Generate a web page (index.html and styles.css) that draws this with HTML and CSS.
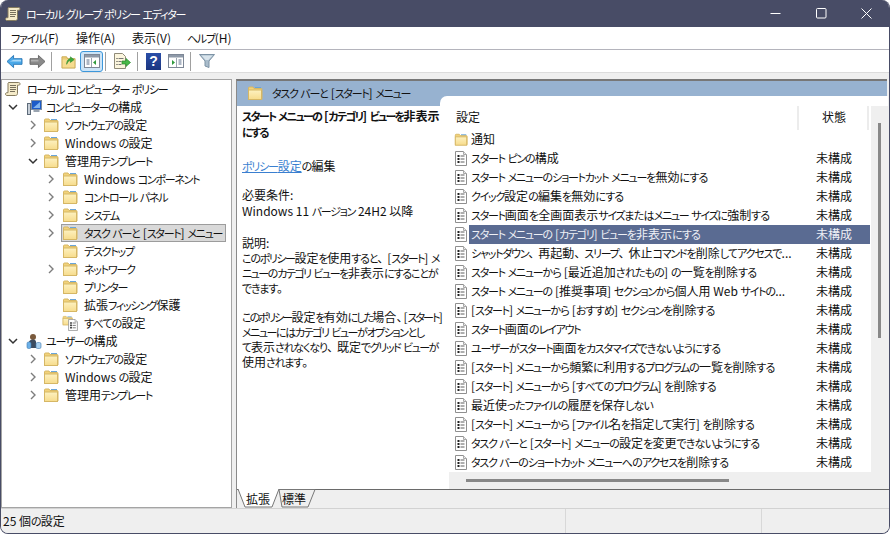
FILE: index.html
```html
<!DOCTYPE html>
<html lang="ja">
<head>
<meta charset="utf-8">
<title>ローカル グループ ポリシー エディター</title>
<link rel="stylesheet" href="styles.css">
</head>
<body>
<svg class="defs" aria-hidden="true">
  <defs>
    <linearGradient id="gf" x1="0" y1="0" x2="0" y2="1"><stop offset="0" stop-color="#fdf1c0"/><stop offset="1" stop-color="#f7dc8c"/></linearGradient>
    <symbol id="folder" viewBox="0 0 16 16">
      <path d="M1.5 14V3a1 1 0 0 1 1-1h3.5l1 1.5h7a1 1 0 0 1 1 1V14z" fill="#f2d27a" stroke="#d6b765"/>
      <path d="M8 2.5h6" stroke="#6aa5d8" fill="none"/>
      <rect x="1.5" y="5" width="13" height="9.5" fill="url(#gf)" stroke="#d6b765"/>
    </symbol>
    <symbol id="doc" viewBox="0 0 14 15">
      <path d="M1.500.5h8l3 3v11h-11z" fill="#fff" stroke="#8f8f8f"/>
      <path d="M9.500.5v3h3" fill="#e8e8e8" stroke="#a8a8a8"/>
      <path d="M3.500 4h2v2h-2zM3.500 7h2v2h-2zM3.500 10h2v2h-2z" fill="#202020"/>
      <path d="M6.500 5h4M6.500 8h4M6.500 11h4" stroke="#5c5c5c"/>
    </symbol>
    <symbol id="scroll" viewBox="0 0 16 16">
      <path d="M3.500 1.500h10c1 0 1.500.6 1.500 1.500s-.6 1.200-1.500 1.200H12.500V12.500c0 1.200-.8 2-2 2H2c-.9 0-1.500-.6-1.500-1.500s.7-1.300 1.500-1.300h1V3c0-.8-.1-1.200.5-1.500z" fill="#f5ebc9" stroke="#857b5e"/>
      <path d="M5 4.500h6M5 6.500h6M5 8.500h6M5 10.500h5" stroke="#77705c"/>
    </symbol>
    <symbol id="chev-r" viewBox="0 0 10 10"><path d="M3 1l4 4-4 4" fill="none" stroke="#7d7d7d" stroke-width="1.400"/></symbol>
    <symbol id="chev-d" viewBox="0 0 10 10"><path d="M1 3l4 4 4-4" fill="none" stroke="#333" stroke-width="1.500"/></symbol>
  </defs>
</svg>

<div class="win">
  <header class="title">
    <svg class="ico16"><use href="#scroll"/></svg>
    <span class="title-text">ローカル グループ ポリシー エディター</span>
    <div class="controls">
      <svg class="ctl" viewBox="0 0 11 11"><path d="M.5 5.500h10" stroke="#fff"/></svg>
      <svg class="ctl" viewBox="0 0 11 11"><rect x=".5" y=".5" width="9.500" height="9.500" rx="1" fill="none" stroke="#fff"/></svg>
      <svg class="ctl" viewBox="0 0 11 11"><path d="M.5.500l10 10M10.500.500l-10 10" stroke="#fff"/></svg>
    </div>
  </header>

  <nav class="menu">
    <span class="m1">ファイル(F)</span><span class="m2">操作(A)</span><span class="m3">表示(V)</span><span class="m4">ヘルプ(H)</span>
  </nav>

  <div class="toolbar">
    <svg class="tb tb-back" viewBox="0 0 18 16"><path d="M1 8l7-6.500V5h9v6H8v3.500z" fill="#4aa8e8" stroke="#2a78b8"/><path d="M8 6h8v2H4z" fill="#a8d8f8"/></svg>
    <svg class="tb tb-fwd" viewBox="0 0 18 16"><path d="M17 8l-7-6.500V5H1v6h9v3.500z" fill="#8a8a8a" stroke="#666"/><path d="M2 6h8v2H2z" fill="#b0b0b0"/></svg>
    <i class="sep sep1"></i>
    <svg class="tb tb-up" viewBox="0 0 16 16"><path d="M1 15V5h14v10z" fill="#f6dc90" stroke="#c8a850"/><path d="M1 5V3h5l1 2" fill="#f0d078" stroke="#c8a850"/><path d="M6 11c0-4 2-6 4-6V3l4 3-4 3V7c-1.500 0-3 1.500-4 4z" fill="#3aa83a" stroke="#2a8a2a" stroke-width=".6"/></svg>
    <span class="tb-on">
      <svg class="tb-in" viewBox="0 0 16 14"><rect x=".5" y=".5" width="15" height="13" fill="#fff" stroke="#7d8796"/><rect x="1" y="1" width="14" height="2.500" fill="#8e99a8"/><path d="M7.500 4v9" stroke="#9aa4b0"/><path d="M2.500 6h3M2.500 8h3M2.500 10h3" stroke="#5b6e8a"/><path d="M12 6v5L9 8.500z" fill="#2f9a3c"/></svg>
    </span>
    <i class="sep sep2"></i>
    <svg class="tb tb-exp" viewBox="0 0 18 17"><path d="M1.500.5h8l3 3v12h-11z" fill="#fbf5dd" stroke="#8f8a78"/><path d="M3.500 5h1v1h-1zM3.500 8h1v1h-1zM3.500 11h1v1h-1z" fill="#333"/><path d="M5.500 5.500h5M5.500 8.500h3M5.500 11.500h3" stroke="#777"/><path d="M9 8h4V5.500l4.500 4-4.500 4V11H9z" fill="#48b848" stroke="#2c8a2c" stroke-width=".7"/></svg>
    <i class="sep sep3"></i>
    <span class="help">?</span>
    <svg class="tb tb-panel" viewBox="0 0 16 14"><rect x=".5" y=".5" width="15" height="13" fill="#fff" stroke="#7d8796"/><rect x="1" y="1" width="14" height="2.500" fill="#8e99a8"/><path d="M8.500 4v9" stroke="#9aa4b0"/><path d="M10.500 6h3M10.500 8h3M10.500 10h3" stroke="#5b6e8a"/><path d="M4 6v5l3-2.500z" fill="#2f9a3c"/></svg>
    <i class="sep sep4"></i>
    <svg class="tb tb-filter" viewBox="0 0 16 16"><path d="M.5 1.500h15L10 8v6.500L6 13V8z" fill="#a9bccb" stroke="#7d93a5"/><path d="M2.500 2.500h11L9.500 7h-3z" fill="#d8e4ec"/></svg>
  </div>

  <main class="main">
    <aside class="tree">
      <div class="node lv0"><svg class="ico16"><use href="#scroll"/></svg><span>ローカル コンピューター ポリシー</span></div>
      <div class="node lv1"><svg class="chev"><use href="#chev-d"/></svg>
        <svg class="ico16" viewBox="0 0 16 16"><rect x="5.500" y="1.500" width="10" height="9" fill="#1c5cc8" stroke="#7d8da0"/><path d="M7 9l7-6v6z" fill="#7fb4f0"/><rect x="7.500" y="11" width="6" height="2" fill="#9aa4b0"/><rect x="1.500" y="4.500" width="3" height="11" fill="#c7cfd8" stroke="#5e6b7a"/></svg>
        <span>コンピューターの構成</span></div>
      <div class="node lv2"><svg class="chev"><use href="#chev-r"/></svg><svg class="ico16"><use href="#folder"/></svg><span>ソフトウェアの設定</span></div>
      <div class="node lv2"><svg class="chev"><use href="#chev-r"/></svg><svg class="ico16"><use href="#folder"/></svg><span>Windows の設定</span></div>
      <div class="node lv2"><svg class="chev"><use href="#chev-d"/></svg><svg class="ico16"><use href="#folder"/></svg><span>管理用テンプレート</span></div>
      <div class="node lv3"><svg class="chev"><use href="#chev-r"/></svg><svg class="ico16"><use href="#folder"/></svg><span>Windows コンポーネント</span></div>
      <div class="node lv3"><svg class="chev"><use href="#chev-r"/></svg><svg class="ico16"><use href="#folder"/></svg><span>コントロール パネル</span></div>
      <div class="node lv3"><svg class="chev"><use href="#chev-r"/></svg><svg class="ico16"><use href="#folder"/></svg><span>システム</span></div>
      <div class="node lv3"><svg class="chev"><use href="#chev-r"/></svg><div class="tree-sel"><svg class="ico16"><use href="#folder"/></svg><span>タスク バーと [スタート] メニュー</span></div></div>
      <div class="node lv3"><i class="chev"></i><svg class="ico16"><use href="#folder"/></svg><span>デスクトップ</span></div>
      <div class="node lv3"><svg class="chev"><use href="#chev-r"/></svg><svg class="ico16"><use href="#folder"/></svg><span>ネットワーク</span></div>
      <div class="node lv3"><i class="chev"></i><svg class="ico16"><use href="#folder"/></svg><span>プリンター</span></div>
      <div class="node lv3"><i class="chev"></i><svg class="ico16"><use href="#folder"/></svg><span>拡張フィッシング保護</span></div>
      <div class="node lv3"><i class="chev"></i><svg class="ico16" viewBox="0 0 16 16"><use href="#folder" width="11" height="11"/><use href="#doc" x="5" y="4" width="12" height="12"/></svg><span>すべての設定</span></div>
      <div class="node lv1"><svg class="chev"><use href="#chev-d"/></svg>
        <svg class="ico16" viewBox="0 0 16 16"><circle cx="7" cy="4" r="3" fill="#7a5a3c"/><path d="M3 15V9c0-1.500 2-2.500 4-2.500s3 1 3 2.500v6z" fill="#3c4c60"/><rect x="1" y="9" width="4" height="6.500" rx="1.500" fill="#6bb0e8" stroke="#3c78b0" stroke-width=".6"/><rect x="10" y="9.500" width="5" height="6" rx="1.500" fill="#a8d0f0" stroke="#3c78b0" stroke-width=".6"/></svg>
        <span>ユーザーの構成</span></div>
      <div class="node lv2"><svg class="chev"><use href="#chev-r"/></svg><svg class="ico16"><use href="#folder"/></svg><span>ソフトウェアの設定</span></div>
      <div class="node lv2"><svg class="chev"><use href="#chev-r"/></svg><svg class="ico16"><use href="#folder"/></svg><span>Windows の設定</span></div>
      <div class="node lv2"><svg class="chev"><use href="#chev-r"/></svg><svg class="ico16"><use href="#folder"/></svg><span>管理用テンプレート</span></div>
    </aside>

    <section class="pane">
      <div class="pane-head"><svg class="ico16"><use href="#folder"/></svg><span>タスク バーと [スタート] メニュー</span></div>
      <div class="pane-body">
        <div class="details">
          <p class="d-title">スタート メニューの [カテゴリ] ビューを非表示<br>にする</p>
          <p class="d-link"><a href="#">ポリシー設定</a>の編集</p>
          <p class="d-req">必要条件:<br>Windows 11 バージョン 24H2 以降</p>
          <p class="d-desc">説明:<br>このポリシー設定を使用すると、[スタート] メ<br>ニューのカテゴリ ビューを非表示にすることが<br>できます。</p>
          <p class="d-desc2"><span class="tight">このポリシー設定を有効にした場合、[スタート]</span><br>メニューにはカテゴリ ビューがオプションとし<br>て表示されなくなり、既定でグリッド ビューが<br>使用されます。</p>
        </div>
        <div class="listwrap">
          <div class="list-top">
            <div class="list">
              <div class="cols"><span class="col-name">設定</span><span class="col-state">状態</span></div>
              <div class="row"><svg class="ico-row fold"><use href="#folder"/></svg><span class="nm">通知</span></div>
              <div class="row"><svg class="ico-row"><use href="#doc"/></svg><span class="nm">スタート ピンの構成</span><span class="st">未構成</span></div>
              <div class="row"><svg class="ico-row"><use href="#doc"/></svg><span class="nm">スタート メニューのショートカット メニューを無効にする</span><span class="st">未構成</span></div>
              <div class="row"><svg class="ico-row"><use href="#doc"/></svg><span class="nm">クイック設定の編集を無効にする</span><span class="st">未構成</span></div>
              <div class="row"><svg class="ico-row"><use href="#doc"/></svg><span class="nm">スタート画面を全画面表示サイズまたはメニュー サイズに強制する</span><span class="st">未構成</span></div>
              <div class="row on"><svg class="ico-row"><use href="#doc"/></svg><span class="nm">スタート メニューの [カテゴリ] ビューを非表示にする</span><span class="st">未構成</span></div>
              <div class="row"><svg class="ico-row"><use href="#doc"/></svg><span class="nm">シャットダウン、再起動、スリープ、休止コマンドを削除してアクセスで...</span><span class="st">未構成</span></div>
              <div class="row"><svg class="ico-row"><use href="#doc"/></svg><span class="nm">スタート メニューから [最近追加されたもの] の一覧を削除する</span><span class="st">未構成</span></div>
              <div class="row"><svg class="ico-row"><use href="#doc"/></svg><span class="nm">スタート メニューの [推奨事項] セクションから個人用 Web サイトの...</span><span class="st">未構成</span></div>
              <div class="row"><svg class="ico-row"><use href="#doc"/></svg><span class="nm">[スタート] メニューから [おすすめ] セクションを削除する</span><span class="st">未構成</span></div>
              <div class="row"><svg class="ico-row"><use href="#doc"/></svg><span class="nm">スタート画面のレイアウト</span><span class="st">未構成</span></div>
              <div class="row"><svg class="ico-row"><use href="#doc"/></svg><span class="nm">ユーザーがスタート画面をカスタマイズできないようにする</span><span class="st">未構成</span></div>
              <div class="row"><svg class="ico-row"><use href="#doc"/></svg><span class="nm">[スタート] メニューから頻繁に利用するプログラムの一覧を削除する</span><span class="st">未構成</span></div>
              <div class="row"><svg class="ico-row"><use href="#doc"/></svg><span class="nm">[スタート] メニューから [すべてのプログラム] を削除する</span><span class="st">未構成</span></div>
              <div class="row"><svg class="ico-row"><use href="#doc"/></svg><span class="nm">最近使ったファイルの履歴を保存しない</span><span class="st">未構成</span></div>
              <div class="row"><svg class="ico-row"><use href="#doc"/></svg><span class="nm">[スタート] メニューから [ファイル名を指定して実行] を削除する</span><span class="st">未構成</span></div>
              <div class="row"><svg class="ico-row"><use href="#doc"/></svg><span class="nm">タスク バーと [スタート] メニューの設定を変更できないようにする</span><span class="st">未構成</span></div>
              <div class="row"><svg class="ico-row"><use href="#doc"/></svg><span class="nm">タスク バーのショートカット メニューへのアクセスを削除する</span><span class="st">未構成</span></div>
            </div>
            <div class="vscroll"><i></i></div>
          </div>
          <div class="hscroll"><i></i></div>
        </div>
      </div>
      <div class="tabs">
        <svg class="tabs-bg" viewBox="0 0 652 19" aria-hidden="true">
          <path d="M0 .5H652" stroke="#6a6a6a" fill="none"/>
          <path d="M1 0l7 18h27l7-18z" fill="#fff"/>
          <path d="M1 0l7 18h27l7-18" stroke="#777" fill="none"/>
          <path d="M42 .5h36l-7 17.500H45z" fill="#efefef" stroke="#777"/>
        </svg>
        <span class="tab t1">拡張</span><span class="tab t2">標準</span>
      </div>
    </section>
  </main>

  <footer class="status"><span class="s1">25 個の設定</span><span class="s2"></span><span class="s3"></span></footer>
</div>
<script src="kana.js"></script>
</body>
</html>
```
FILE: styles.css
```css
* { box-sizing: border-box; }
html, body { margin: 0; padding: 0; background: #fff; }
body {
  width: 890px; height: 534px; overflow: hidden;
  font: 12px/16px "Noto Sans CJK JP", "Noto Sans", sans-serif;
  font-feature-settings: "palt";
  color: #111;
}
.hira, .kata { font-size: 11px; line-height: 1; }
.hira { letter-spacing: -.8px; }
.kata { letter-spacing: -1.25px; }
.punct { font-feature-settings: normal; letter-spacing: -2px; }
.defs { position: absolute; width: 0; height: 0; }
p { margin: 0; }

.win {
  width: 890px; height: 534px;
  display: flex; flex-direction: column;
  background: #efefef;
  border: 1px solid #484c66; border-top: 0;
  border-radius: 8px;
  overflow: hidden;
}

.title {
  height: 27px; flex: none; background: #484c66; color: #fff;
  display: flex; align-items: center; padding-left: 4px;
}
.ico16 { width: 16px; height: 16px; flex: none; }
.title-text { margin-left: 5px; white-space: nowrap; }
.controls { margin-left: auto; display: flex; gap: 34.5px; padding-right: 17px; }
.ctl { width: 11px; height: 11px; }

.menu {
  height: 23px; flex: none; background: #fff; border-bottom: 1px solid #b4b4bc;
  display: flex; align-items: center; padding-bottom: 1px; padding-left: 10px;
}
.m1 { width: 65px; } .m2 { width: 56px; } .m3 { width: 55px; }

.toolbar {
  height: 23px; flex: none; background: #fff; border-bottom: 1px solid #dcdcdc;
  display: flex; align-items: center; padding-left: 5px;
}
.tb { flex: none; }
.tb-back, .tb-fwd { width: 17px; height: 15px; }
.tb-fwd { margin-left: 6px; }
.sep { width: 1px; height: 19px; background: #a0a0a0; flex: none; }
.sep1 { margin: 0 9px 0 5px; }
.tb-up { width: 15px; height: 15px; }
.tb-on {
  width: 23px; height: 21px; margin-left: 4px; flex: none;
  background: #cce4f7; border: 1px solid #3d97da; border-radius: 3px;
  display: flex; align-items: center; justify-content: center;
}
.tb-in { width: 16px; height: 14px; }
.sep2 { margin: 0 7px 0 2px; }
.tb-exp { width: 18px; height: 17px; }
.sep3 { margin: 0 8px 0 6px; }
.help {
  width: 15px; height: 17px; flex: none; background: linear-gradient(#2a4fa8, #1c3580);
  color: #fff; font: 700 14px/17px "Liberation Sans", sans-serif; text-align: center;
}
.tb-panel { width: 16px; height: 14px; margin-left: 7px; }
.sep4 { margin: 0 8px 0 6px; }
.tb-filter { width: 16px; height: 16px; }

.main {
  flex: 1; min-height: 0; display: flex; gap: 4px;
  padding: 6px 2px 0 0;
  background: #efefef;
  border-bottom: 1px solid #d2d2d2;
}

.tree {
  width: 231px; flex: none; background: #fff;
  border: 1px solid #a4a4a4;
  white-space: nowrap;
}
.node { height: 18px; display: flex; align-items: center; }
.node > span { margin-left: 6px; }
.chev { width: 10px; height: 10px; flex: none; display: block; }
.lv0 { padding-left: 3px; }
.lv1 { padding-left: 6px; }
.lv1 .chev { margin-right: 8px; }
.lv1 > span { margin-left: 4px; }
.lv2 { padding-left: 26px; }
.lv2 .chev { margin-right: 5px; }
.lv3 { padding-left: 44px; }
.lv3 .chev { margin-right: 6px; }
.tree-sel {
  display: flex; align-items: center; height: 18px; width: 165px;
  margin-left: -1px;
  background: #d9d9d9; border: 1px solid #9c9c9c;
  overflow: hidden;
}
.tree-sel > span { margin-left: 6px; }

.pane {
  flex: 1; min-width: 0; display: flex; flex-direction: column;
  border-left: 1px solid #8a8a8a; border-top: 2px solid #777;
  background: #fff;
}
.pane-head {
  height: 25px; flex: none; background: #97b2d0; display: flex; align-items: center;
  padding-left: 10px; padding-bottom: 2px;
}
.pane-head > span { margin-left: 9px; white-space: nowrap; }
.pane-body { flex: 1; min-height: 0; display: flex; background: #fff; }
.details { width: 203px; flex: none; padding: 2px 0 0 5px; white-space: nowrap; line-height: 15px; position: relative; z-index: 1; }
.d-title { font-weight: 700; line-height: 16px; }
.d-title .hira, .d-title .kata { letter-spacing: -1.7px; }
.d-link { margin-top: 18px; }
.d-link a { color: #3a7fd0; }
.d-req { margin-top: 14px; line-height: 16px; }
.d-desc { margin-top: 16px; }
.d-desc2 { margin-top: 14px; }
.d-desc .hira, .d-desc2 .hira { letter-spacing: -1.2px; }
.d-desc .kata, .d-desc2 .kata { letter-spacing: -1.5px; }
.d-desc2 .tight .hira, .d-desc2 .tight .kata { letter-spacing: -1.9px; }
.d-desc2 .tight .punct { letter-spacing: -5px; }

.listwrap {
  width: 448px; flex: none; margin-top: -10px; position: relative;
  display: flex; flex-direction: column; height: 394px;
  background: #fff; border-radius: 7px 0 0 0;
}
.list-top { display: flex; height: 376px; padding-left: 9px; }
.list { width: 422px; flex: none; background: #fff; }
.cols { height: 34px; display: flex; align-items: flex-start; padding-top: 10px; }
.col-name { width: 343px; margin-left: 7px; height: 24px; line-height: 22px; border-right: 2px solid #ececec; flex: none; }
.col-state { width: 70px; height: 24px; line-height: 22px; padding-left: 2px; text-align: center; border-right: 2px solid #ececec; flex: none; }
.row { height: 19px; display: flex; align-items: center; white-space: nowrap; }
.ico-row { width: 14px; height: 15px; margin-left: 5px; flex: none; }
.nm {
  margin-left: 1px; padding-left: 2px; width: 347px; height: 19px; line-height: 17px; flex: none;
  overflow: hidden;
}
.st { width: 54px; height: 19px; line-height: 17px; flex: none; }
.row.on .nm, .row.on .st { background: #5a6b92; color: #eef0f6; }
.vscroll { flex: 1; margin-top: 10px; background: #efefef; display: flex; justify-content: center; padding-top: 17px; }
.vscroll i { width: 3px; height: 215px; background: #888; display: block; }
.hscroll { height: 18px; margin-left: 9px; background: #efefef; padding: 7px 0 0 17px; }
.hscroll i { display: block; width: 263px; height: 3px; background: #888; }

.tabs { height: 19px; flex: none; position: relative; background: #efefef; display: flex; padding-left: 9px; }
.tabs-bg { position: absolute; left: 0; top: 0; width: 652px; height: 19px; }
.tab { position: relative; width: 36px; line-height: 20px; }

.status {
  height: 24px; flex: none; display: flex; background: #efefef; line-height: 23px;
  padding-left: 2px;
}
.s1 { width: 563px; border-right: 1px solid #d8d8d8; }
.s2 { width: 196px; border-right: 1px solid #d8d8d8; }
.s3 { flex: 1; }
```
FILE: kana.js
```js
// Kana in the UI font of the reference are much narrower than the kanji,
// and no installed font does that, so runs of kana get classes of their own.
var runs = /([\u3040-\u309f]+|[\u30a0-\u30ff]+|[\u3001\u3002]+)/;
var walker = document.createTreeWalker(document.querySelector('.win'), NodeFilter.SHOW_TEXT);
var nodes = [];
while (walker.nextNode()) {
  if (runs.test(walker.currentNode.nodeValue)) nodes.push(walker.currentNode);
}
function classOf(text) {
  var code = text.charCodeAt(0);
  if (code < 0x3040) return 'punct';
  return code < 0x30a0 ? 'hira' : 'kata';
}
nodes.forEach(function (node) {
  var frag = document.createDocumentFragment();
  node.nodeValue.split(runs).forEach(function (part, i) {
    if (!part) return;
    if (i % 2) {
      var span = document.createElement('span');
      span.className = classOf(part);
      span.textContent = part;
      frag.appendChild(span);
    } else {
      frag.appendChild(document.createTextNode(part));
    }
  });
  node.parentNode.replaceChild(frag, node);
});
```
